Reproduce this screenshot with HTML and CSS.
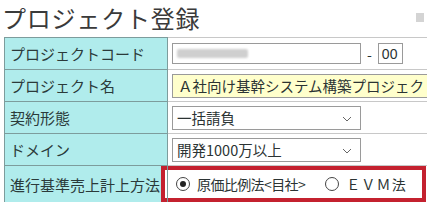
FILE: index.html
```html
<!DOCTYPE html>
<html lang="ja">
<head>
<meta charset="utf-8">
<link rel="stylesheet" href="styles.css">
</head>
<body>
<div class="page">
  <div class="header">
    <h1 class="title">プロジェクト登録</h1>
    <span class="corner"></span>
  </div>
  <table class="form">
    <tr>
      <th>プロジェクトコード</th>
      <td>
        <div class="line">
          <span class="input code"><span class="blur"></span></span>
          <span class="dash">-</span>
          <span class="input sub">00</span>
        </div>
      </td>
    </tr>
    <tr>
      <th>プロジェクト名</th>
      <td><span class="input name">Ａ社向け基幹システム構築プロジェクト</span></td>
    </tr>
    <tr>
      <th>契約形態</th>
      <td><span class="select">一括請負<svg class="chev" viewBox="0 0 10 6" width="10" height="6"><path d="M1 1l4 4 4-4" fill="none" stroke="#666" stroke-width="1"/></svg></span></td>
    </tr>
    <tr>
      <th>ドメイン</th>
      <td><span class="select">開発1000万以上<svg class="chev" viewBox="0 0 10 6" width="10" height="6"><path d="M1 1l4 4 4-4" fill="none" stroke="#666" stroke-width="1"/></svg></span></td>
    </tr>
    <tr>
      <th>進行基準売上計上方法</th>
      <td class="radio-cell">
        <div class="radios">
          <span class="radio on"></span><span class="rlabel first">原価比例法&lt;目社&gt;</span>
          <span class="radio"></span><span class="rlabel evm">ＥＶＭ法</span>
        </div>
      </td>
    </tr>
  </table>
</div>
</body>
</html>
```
FILE: styles.css
```css
html, body {
  margin: 0;
  padding: 0;
  background: #fff;
  overflow: hidden;
}
.page {
  width: 427px;
  height: 202px;
  overflow: hidden;
  font-family: "Noto Sans CJK JP", "Liberation Sans", sans-serif;
  color: #2b3333;
}
.header {
  display: flex;
  align-items: flex-start;
  justify-content: space-between;
  height: 37px;
  padding-left: 2px;
}
.title {
  margin: 0;
  font-size: 24px;
  font-weight: 400;
  line-height: 35px;
  color: #3a3a3a;
  letter-spacing: 0.8px;
}
.corner {
  width: 8px;
  height: 9px;
  background: #d4d4d4;
  margin-right: 3px;
  margin-top: 13px;
}
.form {
  border-collapse: collapse;
  margin-left: 4px;
  width: 560px;
  font-size: 15px;
}
.form th {
  width: 157px;
  background: #b0ecec;
  border: 1px solid #7d9c9c;
  text-align: left;
  font-weight: 400;
  padding: 0 0 0 5px;
  white-space: nowrap;
  color: #2b3a3a;
  height: 31px;
}
.form td {
  border: 1px solid #c8c8c8;
  border-left: 1px solid #7d9c9c;
  padding: 0 0 0 4px;
  height: 31px;
  white-space: nowrap;
}
.line {
  display: flex;
  align-items: center;
}
.input {
  display: inline-flex;
  align-items: center;
  box-sizing: border-box;
  height: 21px;
  border: 1px solid #9a9a9a;
  background: #fff;
  font-size: 14.5px;
  padding-left: 4px;
}
.code {
  width: 189px;
}
.blur {
  width: 71px;
  height: 9px;
  background: #cfcfcf;
  border-radius: 2px;
  filter: blur(1px);
}
.dash {
  margin: 0 6px 0 6px;
  font-size: 14px;
}
.sub {
  width: 25px;
  font-size: 14px;
  padding-left: 3px;
  font-family: "Liberation Sans", sans-serif;
}
.name {
  background: #ffffcc;
  height: 24px;
  width: 320px;
  padding-left: 5px;
}
.select {
  display: inline-flex;
  align-items: center;
  justify-content: space-between;
  box-sizing: border-box;
  width: 189px;
  height: 24px;
  border: 1px solid #9a9a9a;
  padding: 0 8px 0 4px;
  font-size: 14.5px;
}
.chev {
  margin-top: 3px;
}
.radio-cell {
  padding: 0 !important;
}
.radios {
  display: flex;
  align-items: center;
  box-sizing: border-box;
  height: 36px;
  width: 265px;
  margin-left: -7px;
  border: 4px solid #c4212f;
  padding-left: 11px;
  background: #fff;
}
.radio {
  box-sizing: border-box;
  width: 14px;
  height: 14px;
  border-radius: 50%;
  border: 1px solid #444;
  background: #fff;
  position: relative;
  flex: none;
}
.radio.on::after {
  content: "";
  position: absolute;
  left: 3px;
  top: 3px;
  width: 6px;
  height: 6px;
  border-radius: 50%;
  background: #222;
}
.rlabel {
  margin-left: 7px;
  font-size: 14px;
}
.first {
  margin-right: 20px;
  letter-spacing: -0.6px;
}
.evm {
  letter-spacing: 1.2px;
}
```
